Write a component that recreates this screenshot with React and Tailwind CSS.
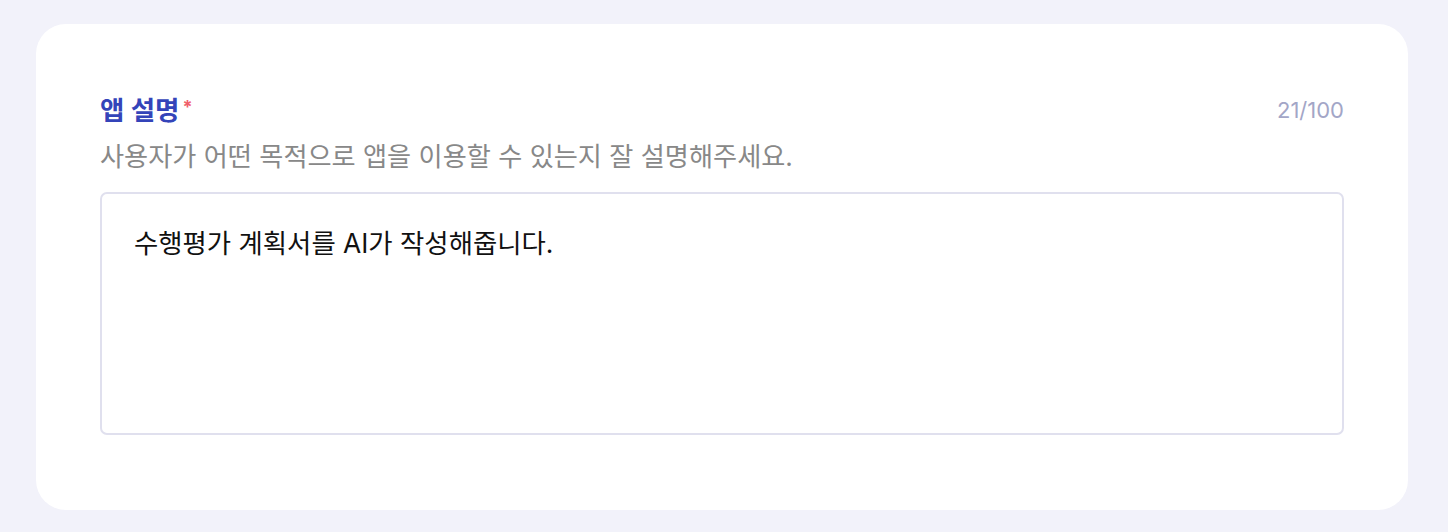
export default function App() {
  return (
    <div
      className="min-h-[532px] bg-[#f2f2fa] pl-[36px] pr-[40px] pt-[24px] pb-[22px]"
      style={{ fontFamily: 'Inter, "Noto Sans CJK KR", sans-serif' }}
    >
      <div className="bg-white rounded-[30px] pl-[64px] pr-[64px] pt-[70px] pb-[75px]">
        <div className="flex items-center justify-between h-[32px]">
          <div className="flex items-start">
            <span className="text-[26.5px] font-bold text-[#3444b9] leading-[32px]">앱 설명</span>
            <span className="text-[18px] font-bold text-[#f0606a] leading-[18px] ml-[3px] mt-[4px]">*</span>
          </div>
          <span className="text-[22px] text-[#a3a6c7] leading-[32px]">21/100</span>
        </div>
        <p className="mt-[13px] text-[26.2px] text-[#888888] leading-[36px]">
          사용자가 어떤 목적으로 앱을 이용할 수 있는지 잘 설명해주세요.
        </p>
        <div className="mt-[17px] h-[243px] border-2 border-[#e0e0ee] rounded-[7px] px-[32px] pt-[31px]">
          <p className="text-[26.4px] text-[#111111] leading-[36px]">
            수행평가 계획서를 AI가 작성해줍니다.
          </p>
        </div>
      </div>
    </div>
  );
}
